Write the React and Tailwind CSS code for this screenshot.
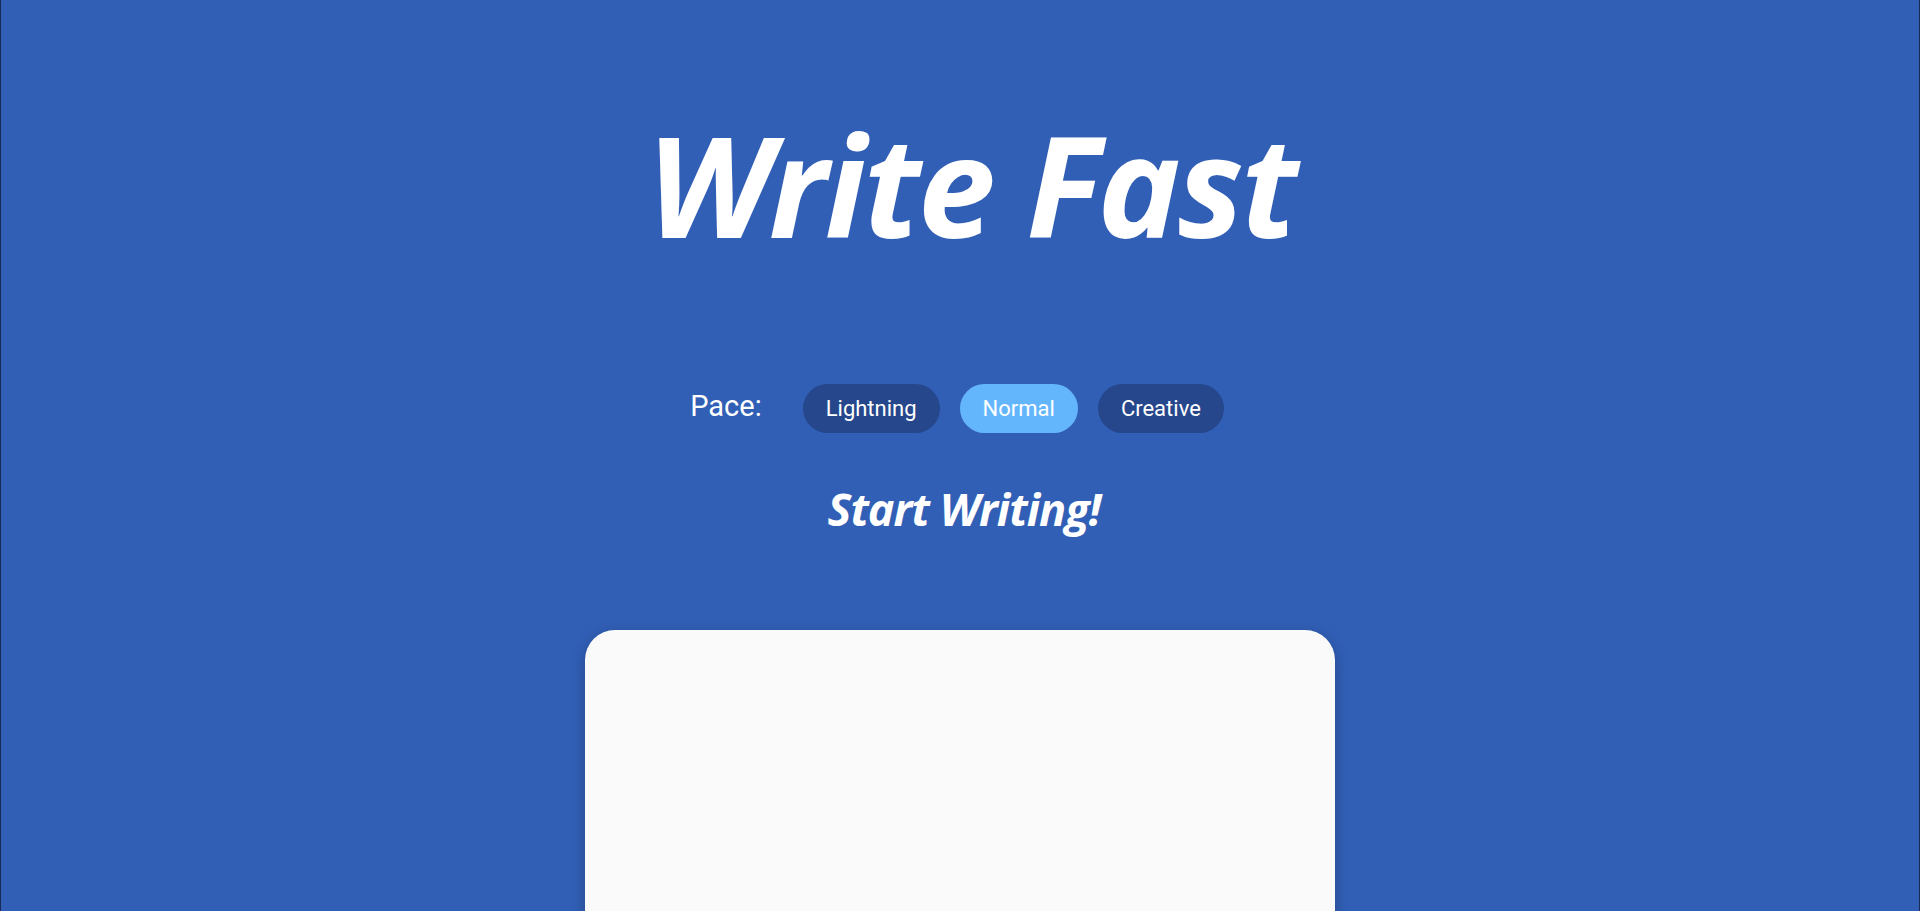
import React, { useState } from "react";

const paces = ["Lightning", "Normal", "Creative"];

export default function App() {
  const [pace, setPace] = useState("Normal");
  const [text, setText] = useState("");

  return (
    <div className="min-h-screen h-[911px] overflow-hidden bg-[#315fb6] border-x border-[#172a55] flex flex-col items-center">
      <h1 className="mt-[104px] ml-[22px] text-white italic font-bold text-[140px] leading-[160px] tracking-[-3px] font-['Open_Sans',sans-serif]">
        Write Fast
      </h1>

      <div className="mt-[120px] -ml-[6px] flex items-center">
        <span className="text-white text-[29px] font-['Roboto',sans-serif] mr-[41px] -mt-[4px]">Pace:</span>
        <div className="flex gap-[20px]">
          {paces.map((p) => (
            <button
              key={p}
              onClick={() => setPace(p)}
              className={
                "h-[49px] px-[23px] rounded-full text-white text-[22px] font-['Roboto',sans-serif] " +
                (pace === p ? "bg-[#64b6fc]" : "bg-[#26478c]")
              }
            >
              {p}
            </button>
          ))}
        </div>
      </div>

      <h2 className="mt-[48px] ml-[8px] text-white italic font-bold text-[45px] leading-[56px] tracking-[-1px] font-['Open_Sans',sans-serif]">
        Start Writing!
      </h2>

      <div className="mt-[93px] w-[750px] h-[400px] shrink-0 bg-[#fafafa] rounded-[30px] shadow-[0_4px_14px_rgba(0,0,0,0.25)] overflow-hidden">
        <textarea
          value={text}
          onChange={(e) => setText(e.target.value)}
          className="w-full h-full bg-transparent resize-none outline-none p-6 text-[20px] text-gray-800 font-['Roboto',sans-serif]"
        />
      </div>
    </div>
  );
}
